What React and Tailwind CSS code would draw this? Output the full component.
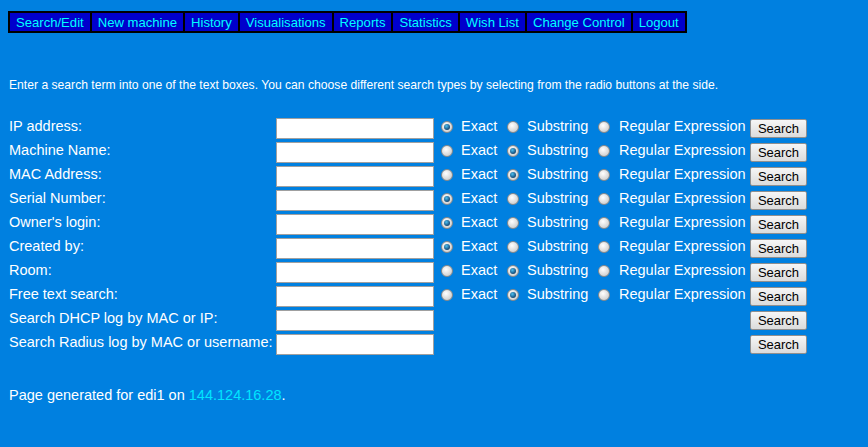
import React from 'react';

const navItems = [
  'Search/Edit',
  'New machine',
  'History',
  'Visualisations',
  'Reports',
  'Statistics',
  'Wish List',
  'Change Control',
  'Logout',
];

const rows = [
  { label: 'IP address:', mode: 0 },
  { label: 'Machine Name:', mode: 1 },
  { label: 'MAC Address:', mode: 1 },
  { label: 'Serial Number:', mode: 0 },
  { label: "Owner's login:", mode: 0 },
  { label: 'Created by:', mode: 0 },
  { label: 'Room:', mode: 1 },
  { label: 'Free text search:', mode: 1 },
  { label: 'Search DHCP log by MAC or IP:', mode: null },
  { label: 'Search Radius log by MAC or username:', mode: null },
];

function Radio({ checked }) {
  return (
    <span className="inline-flex w-[12px] h-[12px] rounded-full border border-[#8a8a8a] bg-[radial-gradient(circle_at_40%_35%,#ffffff,#d4d4d4_70%,#b8b8b8)] items-center justify-center shrink-0">
      {checked && (
        <span className="w-[6px] h-[6px] rounded-full bg-[radial-gradient(circle_at_40%_35%,#4ec0f0,#1a5a8a_60%,#0b2e4a)]" />
      )}
    </span>
  );
}

function SearchButton() {
  return (
    <button className="w-[57px] h-[19px] mt-[1px] rounded-[2px] border border-[#8f8f8f] bg-gradient-to-b from-[#f6f6f6] to-[#dcdcdc] text-[13px] leading-none text-black">
      Search
    </button>
  );
}

export default function App() {
  return (
    <div className="min-h-[447px] bg-[#0080e0] text-white px-[8px] pt-[11px] font-['Liberation_Sans',Arial,sans-serif]">
      {/* Top nav */}
      <div className="flex w-fit border-2 border-black bg-black gap-[2px] h-[22px]">
        {navItems.map((item) => (
          <a
            key={item}
            href="#"
            className="bg-[#0000cc] text-[#00ffff] text-[13.1px] leading-[18px] px-[6px] pt-[1px] flex items-center"
          >
            {item}
          </a>
        ))}
      </div>

      <p className="mt-[45px] text-[12.15px] leading-[14px] pl-[1px]">
        Enter a search term into one of the text boxes. You can choose different search types by selecting from the radio buttons at the side.
      </p>

      {/* Search form */}
      <div className="mt-[24px] flex flex-col text-[14.5px]">
        {rows.map((row) => (
          <div key={row.label} className="flex items-center h-[24px]">
            <div className="w-[268px] pl-[1px] pb-[3px] whitespace-nowrap">{row.label}</div>
            <input
              type="text"
              className="w-[158px] h-[21px] bg-white border border-[#a0a0a0] outline-none"
            />
            {row.mode !== null ? (
              <div className="flex items-center w-[316px] pl-[7px] pb-[3px]">
                <Radio checked={row.mode === 0} />
                <span className="ml-[8px] w-[46px]">Exact</span>
                <Radio checked={row.mode === 1} />
                <span className="ml-[8px] w-[71px]">Substring</span>
                <Radio checked={row.mode === 2} />
                <span className="ml-[9px] whitespace-nowrap">Regular Expression</span>
              </div>
            ) : (
              <div className="w-[316px]" />
            )}
            <SearchButton />
          </div>
        ))}
      </div>

      <p className="mt-[29px] text-[14.5px] pl-[1px]">
        Page generated for edi1 on <a href="#" className="text-[#00e5ff]">144.124.16.28</a>.
      </p>
    </div>
  );
}
